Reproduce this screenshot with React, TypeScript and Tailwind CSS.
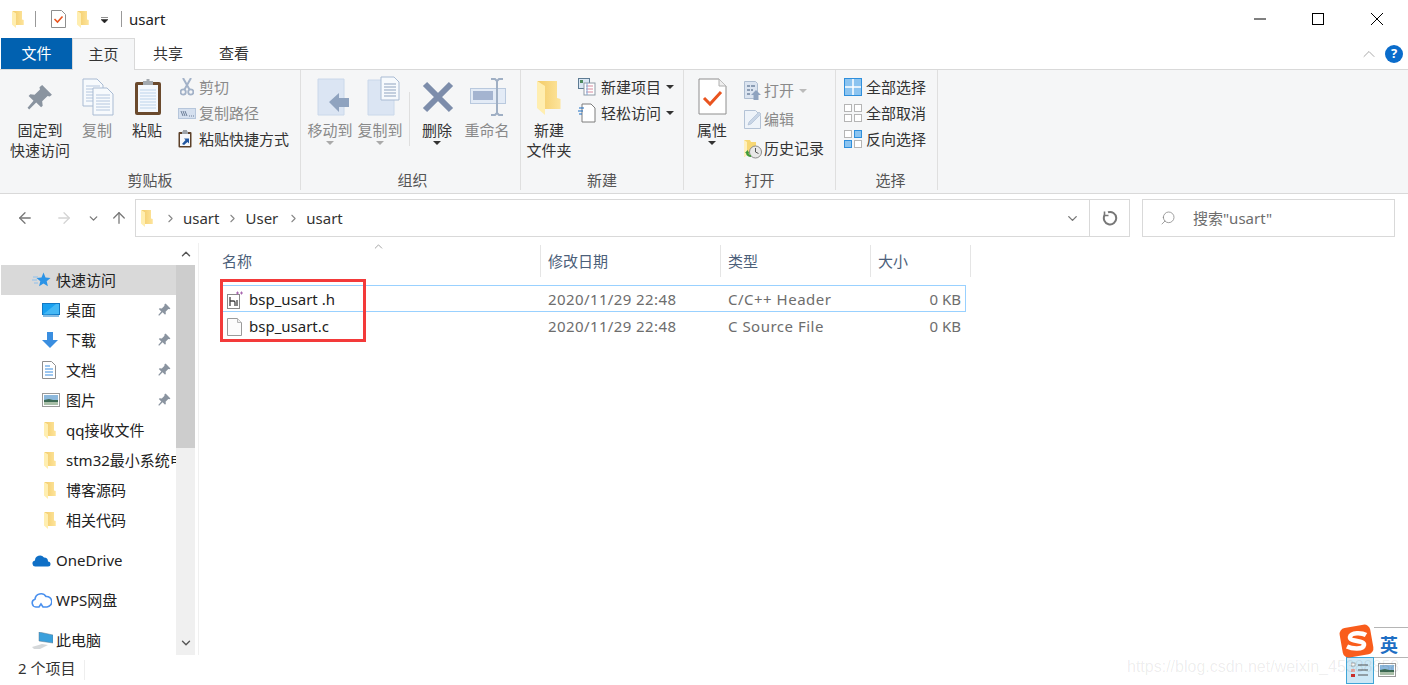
import { ReactNode } from "react";
import { ChevronDown, ChevronUp, ChevronRight, ArrowLeft, ArrowRight, ArrowUp, Search } from "lucide-react";

function Folder({ w = 12, h = 17 }: { w?: number; h?: number }) {
  return (
    <svg width={w} height={h} viewBox="0 0 24 34">
      <defs>
        <linearGradient id="folderBack" x1="0" y1="0" x2="1" y2="0">
          <stop offset="0" stopColor="#f3cb66" />
          <stop offset="1" stopColor="#fde49c" />
        </linearGradient>
      </defs>
      <path d="M0 0H20V17l3.500 1V28H8V6z" fill="url(#folderBack)" />
      <path d="M0 0l8 5v29L0 27z" fill="#ffeeb0" />
    </svg>
  );
}

function Caret({ color = "#333" }: { color?: string }) {
  return (
    <svg width="8" height="4" viewBox="0 0 8 4">
      <path d="M0 0h8L4 4z" fill={color} />
    </svg>
  );
}

function Pin({ size = 15, color = "#8a94a0" }: { size?: number; color?: string }) {
  return (
    <svg width={size} height={size} viewBox="0 0 24 24">
      <path
        d="M14 1l9 9-2 1.500-2-.5-5 5 .5 4-1.500 1.500-4.500-4.500L2 23.500.5 22 6 15.500 1.500 11 3 9.500l4 .5 5-5-.5-2z"
        fill={color}
      />
    </svg>
  );
}

function PageLines({ x, y }: { x: number; y: number }) {
  return (
    <g>
      <path d={`M${x} ${y}h14l6 6v21h-20z`} fill="#f7fafd" stroke="#a9bbd3" />
      <path
        d={`M${x + 3} ${y + 7}h14M${x + 3} ${y + 10}h14M${x + 3} ${y + 13}h14M${x + 3} ${y + 16}h14M${x + 3} ${y + 19}h14M${x + 3} ${y + 22}h14`}
        stroke="#b4c6de"
      />
    </g>
  );
}

function CopyIcon() {
  return (
    <svg width="32" height="38" viewBox="0 0 32 38" className="ml-[2px]">
      <PageLines x={1} y={1} />
      <PageLines x={11} y={10} />
    </svg>
  );
}

function ClipboardIcon() {
  return (
    <svg width="26" height="38" viewBox="0 0 26 38" className="ml-[2px]">
      <rect x="0" y="4" width="26" height="33" rx="2" fill="#6b4a2d" />
      <rect x="3" y="7" width="20" height="27" fill="#f4f8fd" />
      <path d="M5 12h16M5 15h16M5 18h16M5 21h16M5 24h16M5 27h16M5 30h16" stroke="#bcd3ea" />
      <path d="M8 7V3h3.500V1h3v2H18v4z" fill="#a3a9af" />
    </svg>
  );
}

function ScissorsIcon() {
  return (
    <svg width="14" height="18" viewBox="0 0 14 18" fill="none" stroke="#a3b2c8" strokeWidth="1.800">
      <circle cx="3.200" cy="14" r="2.600" />
      <circle cx="10.800" cy="14" r="2.600" />
      <path d="M4.500 11.500L11 0M9.500 11.500L3 0" strokeWidth="2" />
    </svg>
  );
}

function CopyPathIcon() {
  return (
    <svg width="18" height="11" viewBox="0 0 18 11">
      <rect x="0.500" y="0.500" width="17" height="10" fill="#d5e0ef" stroke="#b6c6db" />
      <path d="M3 3l2 5M5 3l2 5M7 3l2 5" stroke="#6d7f99" />
      <path d="M11 8h1M13 8h1M15 8h1" stroke="#6d7f99" />
    </svg>
  );
}

function ShortcutIcon() {
  return (
    <svg width="14" height="18" viewBox="0 0 14 18">
      <rect x="0.500" y="2" width="13" height="15.500" rx="1" fill="#5c4029" />
      <rect x="2" y="4" width="10" height="12" fill="#f6f8fb" />
      <path d="M5 1.500V0h4v1.500h1V4H4V1.500z" fill="#9da3a9" />
      <path d="M4 14l3.500-4L6 8.500h5v5L9.500 12 6 15z" fill="#21569f" />
    </svg>
  );
}

function MoveToIcon() {
  return (
    <svg width="33" height="38" viewBox="0 0 33 38" className="ml-[6px]">
      <path d="M1 1h26v36H1z" fill="#dbe5f3" stroke="#cad8ea" />
      <path d="M12 24l10-9v5h10v9H22v5z" fill="#8fa3bf" />
    </svg>
  );
}

function CopyToIcon() {
  return (
    <svg width="33" height="40" viewBox="0 0 33 40" className="ml-[6px] -mt-[2px]">
      <path d="M1 4h26v35H1z" fill="#dbe5f3" stroke="#cad8ea" />
      <path d="M14 1h13l5 5v18H14z" fill="#f7fafd" stroke="#a9bbd3" />
      <path d="M17 8h12M17 11h12M17 14h12M17 17h12M17 20h12" stroke="#8fa3bf" />
    </svg>
  );
}

function DeleteIcon() {
  return (
    <svg width="32" height="32" viewBox="0 0 32 32" className="ml-[2px] mt-[3px]">
      <path d="M3 3l26 26M29 3L3 29" stroke="#7d8dab" strokeWidth="6" />
    </svg>
  );
}

function RenameIcon() {
  return (
    <svg width="36" height="38" viewBox="0 0 36 38" className="ml-[2px]">
      <rect x="0.500" y="10.500" width="35" height="15" fill="#e3ebf6" stroke="#b9c9de" />
      <rect x="3" y="13" width="20" height="9" fill="#a4b4d0" />
      <path d="M21 1h4l2 2 2-2h4M27 3v32M21 37h4l2-2 2 2h4" fill="none" stroke="#9fafc4" strokeWidth="2" />
    </svg>
  );
}

function NewItemIcon() {
  return (
    <svg width="18" height="18" viewBox="0 0 18 18">
      <rect x="0.500" y="0.500" width="11" height="10" fill="#d9e6f3" stroke="#5d7b93" />
      <rect x="2" y="2" width="3" height="3" fill="#4d8a5e" />
      <rect x="6" y="5" width="11" height="12" fill="#fff" stroke="#8f9aa6" />
      <path d="M8 8h7M8 11h7M8 14h7" stroke="#d68a9e" />
      <path d="M9 5v12" stroke="#7fa8d8" />
    </svg>
  );
}

function EasyAccessIcon() {
  return (
    <svg width="18" height="20" viewBox="0 0 18 20">
      <path d="M4 1h9l4 4v14H4z" fill="#fff" stroke="#7d7d7d" />
      <path d="M1 5h5M0 8h5M1 11h3" stroke="#1c6fc4" strokeWidth="1.200" />
    </svg>
  );
}

function PropertiesIcon() {
  return (
    <svg width="29" height="37" viewBox="0 0 29 37">
      <path d="M1 1h20l7 7v28H1z" fill="#fff" stroke="#8e8e8e" />
      <path d="M21 1v7h7" fill="#eee" stroke="#b0b0b0" />
      <path d="M6 20l6 6 11-12" fill="none" stroke="#e9541f" strokeWidth="3" />
    </svg>
  );
}

function OpenIcon() {
  return (
    <svg width="18" height="19" viewBox="0 0 18 19">
      <path d="M.5.500h11l2 2v15H.5z" fill="#dbe4f0" stroke="#aebdd0" />
      <path d="M3 4h3v2H3zM3 8h3v2H3zM3 12h3v2H3zM7 4h4v2H7zM7 8h2v2H7z" fill="#8c9db4" />
      <path d="M12 9l5 5h-2.500v5h-5v-5H7z" fill="#8fa3bf" />
    </svg>
  );
}

function EditIcon() {
  return (
    <svg width="18" height="19" viewBox="0 0 18 19">
      <path d="M.5.500h11l5 5v13H.5z" fill="#eef3f9" stroke="#b4c3d6" />
      <path d="M4 15l1-3L15 2l2 2L7 14z" fill="#c8d5e6" stroke="#a8b9cf" strokeWidth=".6" />
    </svg>
  );
}

function HistoryIcon() {
  return (
    <svg width="18" height="20" viewBox="0 0 18 20">
      <path d="M0 1h6l1 2h5v13H3l-3 2z" fill="#f7d774" />
      <path d="M0 1l3 2v13l-3 2z" fill="#fff0bd" />
      <circle cx="11.500" cy="13" r="6" fill="#e8e8e8" stroke="#8a8a8a" />
      <path d="M11.500 9v4l3 1.500" fill="none" stroke="#555" />
      <path d="M3 14a4 4 0 0 0 4 3" fill="none" stroke="#3f9b3a" strokeWidth="2.200" />
      <path d="M1 14l2.500-3 2 3.500z" fill="#3f9b3a" />
    </svg>
  );
}

function SelectAllIcon() {
  return (
    <svg width="18" height="18" viewBox="0 0 18 18">
      <rect x="0.500" y="0.500" width="17" height="17" fill="#8cc4f0" stroke="#2f8fdc" />
      <path d="M9 1v16M1 9h16" stroke="#fff" strokeWidth="1.500" />
    </svg>
  );
}

function SelectCellsIcon({ cells }: { cells: boolean[] }) {
  const pos = [
    [0.5, 0.5],
    [10.5, 0.5],
    [0.5, 10.5],
    [10.5, 10.5],
  ];
  return (
    <svg width="18" height="18" viewBox="0 0 18 18">
      {pos.map(([x, y], i) => (
        <rect
          key={i}
          x={x}
          y={y}
          width="7"
          height="7"
          fill={cells[i] ? "#8cc4f0" : "#fff"}
          stroke={cells[i] ? "#2f8fdc" : "#b5b5b5"}
        />
      ))}
    </svg>
  );
}

function StarIcon() {
  return (
    <svg width="19" height="16" viewBox="0 0 19 16">
      <path d="M11.500.5l2 5 5 .4-3.800 3.300 1.200 5-4.400-2.700-4.400 2.700 1.200-5L4.500 5.900l5-.4z" fill="#2b93e6" />
      <path d="M1 5h5M0 8h5M2 11h4" stroke="#8fc0ec" />
    </svg>
  );
}

function DesktopIcon() {
  return (
    <svg width="18" height="14" viewBox="0 0 18 14">
      <rect x="0.500" y="0.500" width="17" height="11" fill="#19a0f0" stroke="#1178c4" />
      <path d="M1 11.500L14 1h3v10z" fill="#45b8f5" />
      <path d="M1 13h16" stroke="#1178c4" />
    </svg>
  );
}

function DownloadIcon() {
  return (
    <svg width="16" height="16" viewBox="0 0 16 16">
      <path d="M5 0h6v8h5l-8 8-8-8h5z" fill="#3a8ee0" />
    </svg>
  );
}

function DocIcon() {
  return (
    <svg width="14" height="18" viewBox="0 0 14 18">
      <path d="M.5.500h9l4 4v13H.5z" fill="#fff" stroke="#8f8f8f" />
      <path d="M3 5h5M3 8h8M3 11h8M3 14h8" stroke="#3a8ee0" />
    </svg>
  );
}

function PictureIcon() {
  return (
    <svg width="18" height="14" viewBox="0 0 18 14">
      <rect x="0.500" y="0.500" width="17" height="13" fill="#fff" stroke="#9a9a9a" />
      <rect x="2" y="2" width="14" height="5" fill="#8cb8dc" />
      <path d="M2 7l5-1 4 1 5 0v5H2z" fill="#3d6b55" />
      <rect x="2" y="9" width="14" height="3" fill="#a9bfa8" />
    </svg>
  );
}

function OneDriveIcon() {
  return (
    <svg width="19" height="13" viewBox="0 0 19 13">
      <path d="M4 12.500a3 3 0 0 1-1-6A5 5 0 0 1 12 3.500a4 4 0 0 1 4 4 2.500 2.500 0 0 1 0 5z" fill="#0f6fc6" />
    </svg>
  );
}

function WpsIcon() {
  return (
    <svg width="21" height="16" viewBox="0 0 21 16">
      <path
        d="M5 15a4 4 0 0 1-1-7.800A6 6 0 0 1 15 4.500 4.500 4.500 0 0 1 16 15h-4l-2-3-2 3z"
        fill="none"
        stroke="#4a90ee"
        strokeWidth="1.600"
      />
    </svg>
  );
}

function PcIcon() {
  return (
    <svg width="21" height="17" viewBox="0 0 21 17">
      <path d="M7 0l14 3v8l-14-2z" fill="#3aa0dc" stroke="#607d90" strokeWidth=".5" />
      <path d="M0 15l10-3 6 1-8 4H2z" fill="#d5d8da" />
    </svg>
  );
}

function HeaderFileIcon() {
  return (
    <svg width="17" height="18" viewBox="0 0 17 18">
      <rect x="0.500" y="3.500" width="12" height="14" fill="#fff" stroke="#8a8a8a" />
      <path d="M3 6v9M3 10h3.500a1.500 1.500 0 0 1 1.500 1.500V15M10 9v6" stroke="#444" strokeWidth="1.300" fill="none" />
      <path d="M9 2h3M10.500.5v3M13 2h3M14.500.5v3" stroke="#a866b0" />
    </svg>
  );
}

function BlankFileIcon() {
  return (
    <svg width="15" height="18" viewBox="0 0 15 18">
      <path d="M.5.500h10l4 4v13H.5z" fill="#fcfcfc" stroke="#9a9a9a" />
      <path d="M10.500.500v4h4" fill="#eee" stroke="#b5b5b5" />
    </svg>
  );
}

function BigButton({
  label,
  icon,
  className,
  dim,
  caret,
}: {
  label: ReactNode;
  icon: ReactNode;
  className: string;
  dim?: boolean;
  caret?: string;
}) {
  return (
    <div className={`flex flex-col items-center pt-2 ${className} ${dim ? "text-[#8a8a8a]" : "text-[#333]"}`}>
      <div className="h-[42px] flex items-start justify-center">{icon}</div>
      <div className="text-center leading-[20px]">{label}</div>
      {caret && (
        <div className="mt-[1px] leading-none">
          <Caret color={caret} />
        </div>
      )}
    </div>
  );
}

function SmallRow({
  icon,
  label,
  iconBox,
  height = "h-[26px]",
  dim,
  caret,
}: {
  icon: ReactNode;
  label: string;
  iconBox: string;
  height?: string;
  dim?: boolean;
  caret?: string;
}) {
  return (
    <div className={`flex items-center ${height} ${dim ? "text-[#8a8a8a]" : "text-[#333]"}`}>
      <div className={`${iconBox} flex items-center`}>{icon}</div>
      <span>{label}</span>
      {caret && (
        <span className="ml-[5px] flex">
          <Caret color={caret} />
        </span>
      )}
    </div>
  );
}

function Group({ label, className, children }: { label: string; className: string; children: ReactNode }) {
  return (
    <div className={`flex flex-col h-[120px] border-r border-[#dfdfdf] ${className}`}>
      <div className="h-[100px] flex">{children}</div>
      <div className="h-[20px] leading-[20px] text-center text-[#555]">{label}</div>
    </div>
  );
}

function Ribbon() {
  return (
    <div className="h-[125px] bg-[#f5f6f7] border-y border-[#d9d9d9] flex text-[15px]">
      <Group label="剪贴板" className="w-[301px]">
        <BigButton
          className="w-[60px] ml-[10px]"
          icon={
            <div className="pt-[6px]">
              <Pin size={26} />
            </div>
          }
          label={
            <>
              固定到
              <br />
              快速访问
            </>
          }
        />
        <BigButton className="w-[54px]" dim icon={<CopyIcon />} label="复制" />
        <BigButton className="w-[46px]" icon={<ClipboardIcon />} label="粘贴" />
        <div className="ml-2 pt-[4px]">
          <SmallRow iconBox="w-[21px] pl-[2px]" dim icon={<ScissorsIcon />} label="剪切" />
          <SmallRow iconBox="w-[21px]" dim icon={<CopyPathIcon />} label="复制路径" />
          <SmallRow iconBox="w-[21px]" icon={<ShortcutIcon />} label="粘贴快捷方式" />
        </div>
      </Group>
      <Group label="组织" className="w-[220px] pl-[4px]">
        <BigButton className="w-[50px]" dim icon={<MoveToIcon />} label="移动到" caret="#aaa" />
        <BigButton className="w-[50px]" dim icon={<CopyToIcon />} label="复制到" caret="#aaa" />
        <div className="w-px h-[54px] mt-[22px] ml-[4px] mr-[3px] bg-[#dfdfdf]" />
        <BigButton className="w-[48px]" icon={<DeleteIcon />} label="删除" caret="#333" />
        <BigButton className="w-[52px]" dim icon={<RenameIcon />} label="重命名" />
      </Group>
      <Group label="新建" className="w-[163px]">
        <BigButton
          className="w-[56px]"
          icon={
            <div className="pt-[3px]">
              <Folder w={24} h={34} />
            </div>
          }
          label={
            <>
              新建
              <br />
              文件夹
            </>
          }
        />
        <div className="ml-[1px] pt-[4px]">
          <SmallRow iconBox="w-[23px]" icon={<NewItemIcon />} label="新建项目" caret="#333" />
          <SmallRow iconBox="w-[23px]" icon={<EasyAccessIcon />} label="轻松访问" caret="#333" />
        </div>
      </Group>
      <Group label="打开" className="w-[152px]">
        <BigButton className="w-[56px]" icon={<PropertiesIcon />} label="属性" caret="#333" />
        <div className="ml-[4px] pt-[6px]">
          <SmallRow iconBox="w-[20px]" height="h-[29px]" dim icon={<OpenIcon />} label="打开" caret="#bbb" />
          <SmallRow iconBox="w-[20px]" height="h-[29px]" dim icon={<EditIcon />} label="编辑" />
          <SmallRow iconBox="w-[20px]" height="h-[29px]" icon={<HistoryIcon />} label="历史记录" />
        </div>
      </Group>
      <Group label="选择" className="w-[102px] pl-[8px]">
        <div className="pt-[4px]">
          <SmallRow iconBox="w-[22px]" icon={<SelectAllIcon />} label="全部选择" />
          <SmallRow iconBox="w-[22px]" icon={<SelectCellsIcon cells={[false, false, false, false]} />} label="全部取消" />
          <SmallRow iconBox="w-[22px]" icon={<SelectCellsIcon cells={[false, true, true, false]} />} label="反向选择" />
        </div>
      </Group>
    </div>
  );
}

function TitleBar() {
  return (
    <div className="h-[38px] flex items-center">
      <div className="ml-[12px] flex">
        <Folder />
      </div>
      <div className="ml-[11px] w-px h-[16px] bg-[#999]" />
      <svg className="ml-[15px]" width="15" height="18" viewBox="0 0 15 18">
        <path d="M.5.500h10l4 4v13H.5z" fill="#fff" stroke="#8e8e8e" />
        <path d="M3.500 9l3 3 5-5.500" fill="none" stroke="#e9541f" strokeWidth="1.600" />
      </svg>
      <div className="ml-[11px] flex">
        <Folder />
      </div>
      <svg className="ml-[12px] mt-[2px]" width="7" height="6" viewBox="0 0 7 6">
        <path d="M0 .5h7M0 2.500h7L3.500 6z" fill="#222" stroke="#222" strokeWidth=".5" />
      </svg>
      <div className="ml-[13px] w-px h-[16px] bg-[#999]" />
      <span className="ml-[7px] text-[15px] text-[#222]">usart</span>
      <div className="ml-auto flex items-center">
        <svg width="12" height="12" viewBox="0 0 12 12">
          <path d="M0 6h12" stroke="#000" />
        </svg>
        <svg className="ml-[46px]" width="12" height="12" viewBox="0 0 12 12">
          <rect x="0.500" y="0.500" width="11" height="11" fill="none" stroke="#000" />
        </svg>
        <svg className="ml-[47px] mr-[25px]" width="12" height="12" viewBox="0 0 12 12">
          <path d="M0 0l12 12M12 0L0 12" stroke="#000" />
        </svg>
      </div>
    </div>
  );
}

function Tabs() {
  return (
    <div className="h-[31px] flex text-[15px] relative z-10 text-[#333]">
      <div className="w-[71px] ml-[1px] bg-[#0161b0] text-white flex items-center justify-center">文件</div>
      <div className="w-[63px] h-[32px] bg-[#f5f6f7] border-x border-t border-[#d9d9d9] flex items-center justify-center">
        主页
      </div>
      <div className="w-[66px] flex items-center justify-center">共享</div>
      <div className="w-[66px] flex items-center justify-center">查看</div>
      <div className="ml-auto flex items-center mr-[5px]">
        <ChevronUp size={20} strokeWidth={1.2} color="#aaa" />
        <div className="ml-[6px] w-[18px] h-[18px] rounded-full bg-[#0a6ccb] text-white text-[13px] font-bold flex items-center justify-center">
          ?
        </div>
      </div>
    </div>
  );
}

function AddressBar() {
  return (
    <div className="h-[44px] flex items-center text-[15px] pt-[4px]">
      <ArrowLeft size={18} strokeWidth={1.7} color="#777" className="ml-[16px]" />
      <ArrowRight size={18} strokeWidth={1.7} color="#d4d4d4" className="ml-[21px]" />
      <ChevronDown size={13} strokeWidth={2.4} color="#777" className="ml-[14px]" />
      <ArrowUp size={18} strokeWidth={1.7} color="#777" className="ml-[10px]" />
      <div className="ml-[7px] w-[995px] h-[38px] border border-[#d9d9d9] flex items-center">
        <div className="ml-[5px] flex">
          <Folder w={12} h={17} />
        </div>
        <ChevronRight size={13} strokeWidth={2} color="#888" className="ml-[11px]" />
        <span className="ml-[6px] text-[#333]">usart</span>
        <ChevronRight size={13} strokeWidth={2} color="#888" className="ml-[7px]" />
        <span className="ml-[6px] text-[#333]">User</span>
        <ChevronRight size={13} strokeWidth={2} color="#888" className="ml-[9px]" />
        <span className="ml-[6px] text-[#333]">usart</span>
        <ChevronDown size={15} strokeWidth={2.2} color="#777" className="ml-auto mr-[9px]" />
        <div className="w-px h-full bg-[#d9d9d9]" />
        <div className="w-[39px] flex justify-center">
          <svg width="16" height="16" viewBox="0 0 16 16" fill="none" stroke="#777" strokeWidth="2">
            <path d="M6 2.300A6.200 6.200 0 1 1 2.700 5" />
            <path d="M2.500 1.500v4h4" strokeWidth="1.600" />
          </svg>
        </div>
      </div>
      <div className="ml-[12px] w-[253px] h-[38px] border border-[#d9d9d9] flex items-center">
        <Search size={16} strokeWidth={1.2} color="#888" className="ml-[17px] -scale-x-100" />
        <span className="ml-[17px] text-[#6d6d6d]">搜索"usart"</span>
      </div>
    </div>
  );
}

const navFolder = (
  <div className="ml-[2px] flex">
    <Folder />
  </div>
);

const navItems: { label: string; icon: ReactNode; pinned?: boolean }[] = [
  { label: "桌面", icon: <DesktopIcon />, pinned: true },
  { label: "下载", icon: <DownloadIcon />, pinned: true },
  { label: "文档", icon: <DocIcon />, pinned: true },
  { label: "图片", icon: <PictureIcon />, pinned: true },
  { label: "qq接收文件", icon: navFolder },
  { label: "stm32最小系统电路", icon: navFolder },
  { label: "博客源码", icon: navFolder },
  { label: "相关代码", icon: navFolder },
];

function Sidebar() {
  return (
    <div className="w-[199px] h-[412px] mt-[5px] flex border-r border-[#f0f0f0] text-[15px] text-[#222]">
      <div className="w-[176px] pt-[22px] overflow-hidden">
        <div className="h-[30px] ml-[1px] bg-[#d9d9d9] flex items-center">
          <div className="ml-[31px] w-[24px]">
            <StarIcon />
          </div>
          <span>快速访问</span>
        </div>
        {navItems.map((item) => (
          <div key={item.label} className="h-[30px] flex items-center relative">
            <div className="ml-[42px] w-[24px] shrink-0 flex items-center">{item.icon}</div>
            <span className="whitespace-nowrap">{item.label}</span>
            {item.pinned && (
              <div className="absolute left-[158px] top-[8px]">
                <Pin size={13} />
              </div>
            )}
          </div>
        ))}
        <div className="h-[30px] mt-[10px] flex items-center">
          <div className="ml-[32px] w-[24px]">
            <OneDriveIcon />
          </div>
          <span>OneDrive</span>
        </div>
        <div className="h-[30px] mt-[10px] flex items-center">
          <div className="ml-[31px] w-[25px]">
            <WpsIcon />
          </div>
          <span>WPS网盘</span>
        </div>
        <div className="h-[30px] mt-[10px] flex items-center">
          <div className="ml-[32px] w-[24px]">
            <PcIcon />
          </div>
          <span>此电脑</span>
        </div>
      </div>
      <div className="w-[19px] bg-[#f0f0f0] flex flex-col">
        <div className="h-[22px] bg-white flex items-center justify-center">
          <ChevronUp size={14} strokeWidth={2.4} color="#555" />
        </div>
        <div className="h-[183px] bg-[#cdcdcd]" />
        <div className="mt-auto h-[25px] flex items-center justify-center">
          <ChevronDown size={14} strokeWidth={2.4} color="#555" />
        </div>
      </div>
    </div>
  );
}

const files = [
  { name: "bsp_usart .h", icon: <HeaderFileIcon />, type: "C/C++ Header", rowClass: "bg-[#99d1ff] p-px" },
  { name: "bsp_usart.c", icon: <BlankFileIcon />, type: "C Source File", rowClass: "p-px" },
];

function FileList() {
  return (
    <div className="flex-1 pt-[7px] text-[15px] relative">
      <div className="h-[32px] flex text-[#4c607a]">
        <div className="w-[342px] pl-[23px] border-r border-[#e5e5e5] flex items-center relative">
          名称
          <ChevronUp size={13} strokeWidth={1.4} color="#888" className="absolute left-[173px] -top-[5px]" />
        </div>
        <div className="w-[180px] pl-[7px] border-r border-[#e5e5e5] flex items-center">修改日期</div>
        <div className="w-[150px] pl-[7px] border-r border-[#e5e5e5] flex items-center">类型</div>
        <div className="w-[100px] pl-[7px] border-r border-[#e5e5e5] flex items-center">大小</div>
      </div>
      <div className="mt-[8px] ml-[23px] w-[744px]">
        {files.map((f) => (
          <div key={f.name} className={`h-[27px] ${f.rowClass}`}>
            <div className="h-full bg-white flex items-center pt-[2px] text-[#6d6d6d]">
              <div className="w-[325px] flex items-center text-[#222]">
                <div className="ml-[4px] w-[22px] flex items-center">{f.icon}</div>
                <span>{f.name}</span>
              </div>
              <div className="w-[180px] whitespace-nowrap tracking-[0.4px]">2020/11/29 22:48</div>
              <div className="w-[150px] tracking-[0.5px]">{f.type}</div>
              <div className="w-[83px] text-right">0 KB</div>
            </div>
          </div>
        ))}
      </div>
      {/* red annotation box from the original screenshot */}
      <div className="absolute left-[21px] top-[41px] w-[146px] h-[63px] border-[3px] border-[#f33a3a]" />
    </div>
  );
}

function StatusBar() {
  return (
    <div className="h-[30px] flex items-center text-[15px] text-[#333]">
      <span className="ml-[18px] mb-[4px]">2 个项目</span>
      <div className="ml-[9px] w-px h-[20px] bg-[#eeeeee]" />
      <div className="ml-auto flex items-center mr-[12px]">
        <div className="w-[28px] h-[27px] bg-[#cce8f6] border border-[#3fa5d8] flex flex-col items-center justify-center gap-[3px]">
          <svg width="18" height="16" viewBox="0 0 18 16">
            <rect x="0" y="1" width="4" height="3" fill="#fff" stroke="#666" strokeWidth=".5" />
            <rect x="0" y="7" width="4" height="3" fill="#e7a9a0" />
            <rect x="0" y="12" width="4" height="3" fill="#c9302c" />
            <path d="M7 3h10M7 8h10M7 13h10" stroke="#555" />
          </svg>
        </div>
        <div className="ml-[4px]">
          <PictureIcon />
        </div>
      </div>
    </div>
  );
}

function Overlays() {
  return (
    <>
      <div className="absolute left-[1127px] top-[654px] text-[16px] leading-[26px] whitespace-nowrap text-black/[0.08] font-['Liberation_Sans',sans-serif] pointer-events-none">
        https://blog.csdn.net/weixin_45388858
      </div>
      <div className="absolute left-[1374px] top-[627px] w-[34px] h-[31px] pt-[5px] pr-[4px] bg-white border-y border-[#b5b5b5] flex items-center justify-center text-[18px] font-bold text-[#1f6fc4]">
        英
      </div>
      <svg className="absolute left-[1338px] top-[623px]" width="38" height="37" viewBox="0 0 38 37">
        <rect x="3" y="3" width="31" height="30" rx="6" transform="rotate(-10 19 18)" fill="#f95d1c" />
        <path d="M28 12c-4-2.500-15-3-16 2s15 3 14 8-12 4-17 1.500" fill="none" stroke="#fff" strokeWidth="4.500" />
      </svg>
    </>
  );
}

export default function App() {
  return (
    <div className="w-[1408px] h-[685px] relative overflow-hidden bg-white font-['Noto_Sans','Noto_Sans_CJK_SC',sans-serif]">
      <TitleBar />
      <Tabs />
      <Ribbon />
      <AddressBar />
      <div className="h-[417px] flex">
        <Sidebar />
        <FileList />
      </div>
      <StatusBar />
      <Overlays />
    </div>
  );
}
